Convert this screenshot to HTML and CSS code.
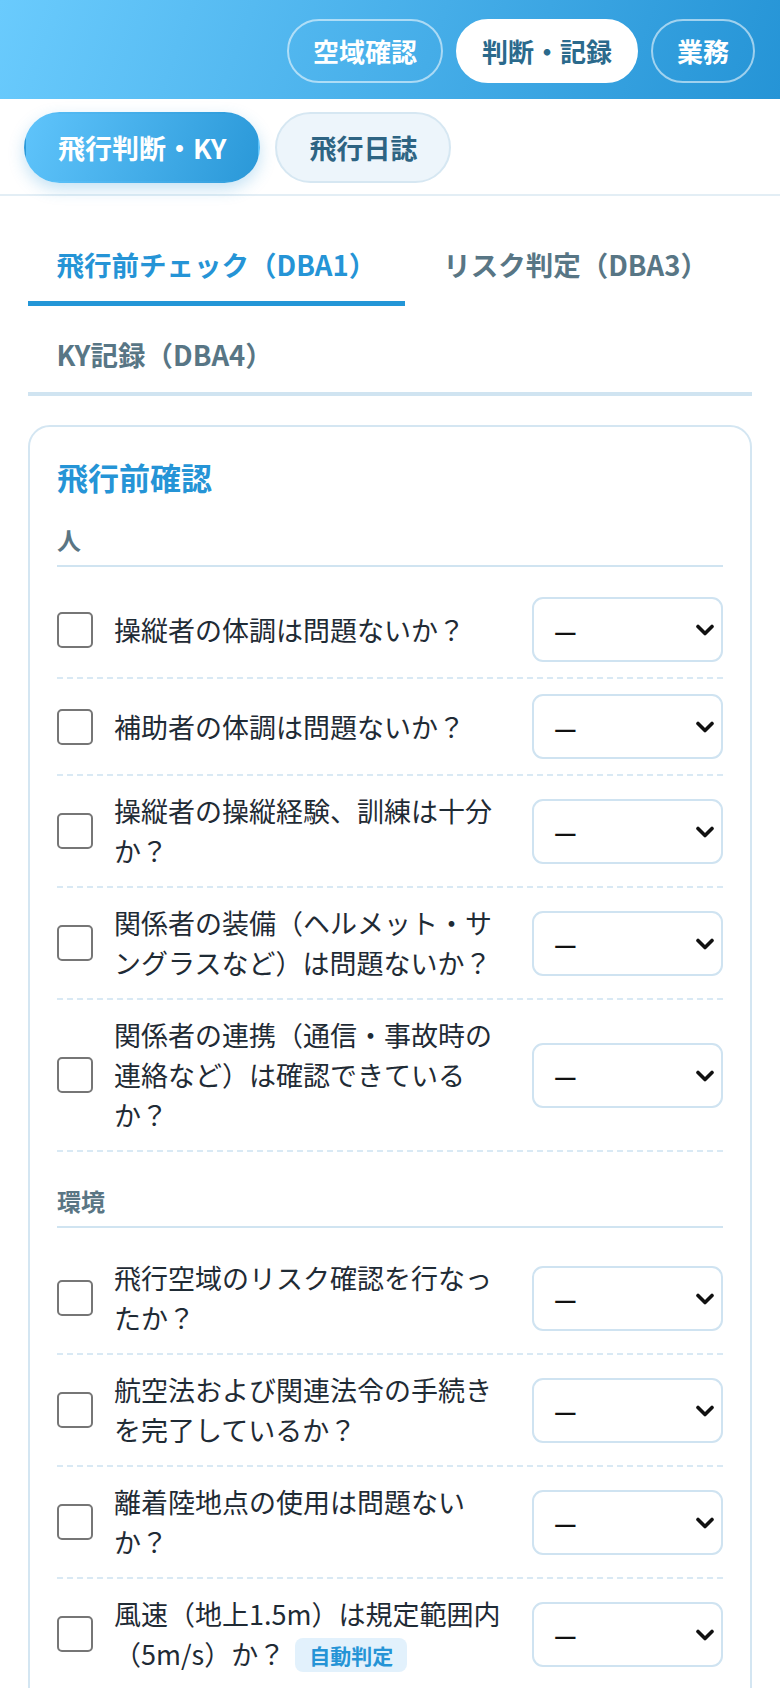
FILE: index.html
```html
<!DOCTYPE html>
<html lang="ja">
<head>
    <meta charset="UTF-8">
    <meta name="viewport" content="width=device-width, initial-scale=1.0">
    <title>飛行判断・KY</title>
    <link rel="stylesheet" href="styles.css">
</head>
<body>

    <!-- 上部ナビ -->
    <header class="app-header">
        <button class="nav-pill">空域確認</button>
        <button class="nav-pill active">判断・記録</button>
        <button class="nav-pill">業務</button>
    </header>

    <!-- サブナビ -->
    <div class="sub-nav">
        <button class="sub-pill active">飛行判断・KY</button>
        <button class="sub-pill">飛行日誌</button>
    </div>

    <main class="page">
        <div class="tabs">
            <button class="tab active">飛行前チェック（DBA1）</button>
            <button class="tab">リスク判定（DBA3）</button>
            <button class="tab">KY記録（DBA4）</button>
        </div>

        <section class="card">
            <h2 class="card-title">飛行前確認</h2>

            <div class="group">
                <h3 class="group-title">人</h3>
                <div class="check-row">
                    <input type="checkbox" class="check">
                    <span class="check-text">操縦者の体調は問題ないか？</span>
                    <div class="select-wrap">
                        <select class="result"><option>—</option><option>OK</option><option>NG</option></select>
                        <svg class="chevron" width="18" height="12" viewBox="0 0 18 12"><polyline points="2,2.5 9,9.5 16,2.5" fill="none" stroke="#111" stroke-width="3.6" stroke-linecap="round" stroke-linejoin="round"/></svg>
                    </div>
                </div>
                <div class="check-row">
                    <input type="checkbox" class="check">
                    <span class="check-text">補助者の体調は問題ないか？</span>
                    <div class="select-wrap">
                        <select class="result"><option>—</option><option>OK</option><option>NG</option></select>
                        <svg class="chevron" width="18" height="12" viewBox="0 0 18 12"><polyline points="2,2.5 9,9.5 16,2.5" fill="none" stroke="#111" stroke-width="3.6" stroke-linecap="round" stroke-linejoin="round"/></svg>
                    </div>
                </div>
                <div class="check-row">
                    <input type="checkbox" class="check">
                    <span class="check-text">操縦者の操縦経験、訓練は十分か？</span>
                    <div class="select-wrap">
                        <select class="result"><option>—</option><option>OK</option><option>NG</option></select>
                        <svg class="chevron" width="18" height="12" viewBox="0 0 18 12"><polyline points="2,2.5 9,9.5 16,2.5" fill="none" stroke="#111" stroke-width="3.6" stroke-linecap="round" stroke-linejoin="round"/></svg>
                    </div>
                </div>
                <div class="check-row">
                    <input type="checkbox" class="check">
                    <span class="check-text">関係者の装備（ヘルメット・サングラスなど）は問題ないか？</span>
                    <div class="select-wrap">
                        <select class="result"><option>—</option><option>OK</option><option>NG</option></select>
                        <svg class="chevron" width="18" height="12" viewBox="0 0 18 12"><polyline points="2,2.5 9,9.5 16,2.5" fill="none" stroke="#111" stroke-width="3.6" stroke-linecap="round" stroke-linejoin="round"/></svg>
                    </div>
                </div>
                <div class="check-row">
                    <input type="checkbox" class="check">
                    <span class="check-text">関係者の連携（通信・事故時の連絡など）は確認できているか？</span>
                    <div class="select-wrap">
                        <select class="result"><option>—</option><option>OK</option><option>NG</option></select>
                        <svg class="chevron" width="18" height="12" viewBox="0 0 18 12"><polyline points="2,2.5 9,9.5 16,2.5" fill="none" stroke="#111" stroke-width="3.6" stroke-linecap="round" stroke-linejoin="round"/></svg>
                    </div>
                </div>
            </div>

            <div class="group">
                <h3 class="group-title">環境</h3>
                <div class="check-row">
                    <input type="checkbox" class="check">
                    <span class="check-text">飛行空域のリスク確認を行なったか？</span>
                    <div class="select-wrap">
                        <select class="result"><option>—</option><option>OK</option><option>NG</option></select>
                        <svg class="chevron" width="18" height="12" viewBox="0 0 18 12"><polyline points="2,2.5 9,9.5 16,2.5" fill="none" stroke="#111" stroke-width="3.6" stroke-linecap="round" stroke-linejoin="round"/></svg>
                    </div>
                </div>
                <div class="check-row">
                    <input type="checkbox" class="check">
                    <span class="check-text">航空法および関連法令の手続きを完了しているか？</span>
                    <div class="select-wrap">
                        <select class="result"><option>—</option><option>OK</option><option>NG</option></select>
                        <svg class="chevron" width="18" height="12" viewBox="0 0 18 12"><polyline points="2,2.5 9,9.5 16,2.5" fill="none" stroke="#111" stroke-width="3.6" stroke-linecap="round" stroke-linejoin="round"/></svg>
                    </div>
                </div>
                <div class="check-row">
                    <input type="checkbox" class="check">
                    <span class="check-text">離着陸地点の使用は問題ないか？</span>
                    <div class="select-wrap">
                        <select class="result"><option>—</option><option>OK</option><option>NG</option></select>
                        <svg class="chevron" width="18" height="12" viewBox="0 0 18 12"><polyline points="2,2.5 9,9.5 16,2.5" fill="none" stroke="#111" stroke-width="3.6" stroke-linecap="round" stroke-linejoin="round"/></svg>
                    </div>
                </div>
                <div class="check-row">
                    <input type="checkbox" class="check">
                    <span class="check-text">風速（地上1.5m）は規定範囲内（5m/s）か？<span class="auto-badge">自動判定</span></span>
                    <div class="select-wrap">
                        <select class="result"><option>—</option><option>OK</option><option>NG</option></select>
                        <svg class="chevron" width="18" height="12" viewBox="0 0 18 12"><polyline points="2,2.5 9,9.5 16,2.5" fill="none" stroke="#111" stroke-width="3.6" stroke-linecap="round" stroke-linejoin="round"/></svg>
                    </div>
                </div>
                <div class="check-row">
                    <input type="checkbox" class="check">
                    <span class="check-text">天候（雨・雪・霧など）は問題ないか？</span>
                    <div class="select-wrap">
                        <select class="result"><option>—</option><option>OK</option><option>NG</option></select>
                        <svg class="chevron" width="18" height="12" viewBox="0 0 18 12"><polyline points="2,2.5 9,9.5 16,2.5" fill="none" stroke="#111" stroke-width="3.6" stroke-linecap="round" stroke-linejoin="round"/></svg>
                    </div>
                </div>
            </div>
        </section>
    </main>

</body>
</html>
```

FILE: styles.css
```css
body {
    font-family: "Noto Sans CJK JP", "Noto Sans", sans-serif;
    background-color: #fff;
    color: #1f2b35;
    margin: 0;
    padding: 0;
}
button {
    font-family: inherit;
    cursor: pointer;
}

/* 上部ナビ */
.app-header {
    height: 99px;
    box-sizing: border-box;
    display: flex;
    justify-content: flex-end;
    align-items: center;
    gap: 13px;
    padding: 2px 25px 0;
    background: linear-gradient(110deg, #6acbfd 0%, #45ade8 55%, #2594d6 100%);
}
.nav-pill {
    font-size: 26px;
    font-weight: 700;
    line-height: 40px;
    padding: 10px 24px;
    color: #fff;
    background: transparent;
    border: 2px solid rgba(255, 255, 255, 0.55);
    border-radius: 999px;
}
.nav-pill.active {
    background: #fff;
    border-color: #fff;
    color: #2b6a8c;
}

/* サブナビ */
.sub-nav {
    display: flex;
    gap: 15px;
    padding: 13px 24px 11px;
    border-bottom: 2px solid #e3eef5;
}
.sub-pill {
    font-size: 27px;
    font-weight: 700;
    line-height: 39px;
    padding: 14px 32px;
    border: 2px solid #d6e7f2;
    border-radius: 999px;
    background: #edf5fb;
    color: #2e6483;
}
.sub-pill.active {
    border-color: transparent;
    background: linear-gradient(110deg, #5fc4fb, #2a98d8);
    color: #fff;
    box-shadow: 0 6px 16px rgba(42, 152, 216, 0.28);
}

.page {
    padding: 33px 28px 40px;
}

/* タブ */
.tabs {
    display: flex;
    flex-wrap: wrap;
    row-gap: 17px;
    column-gap: 10px;
    border-bottom: 4px solid #d0e4f1;
}
.tab {
    font-size: 27.5px;
    font-weight: 700;
    line-height: 39px;
    padding: 16px 28.5px 17px;
    margin-bottom: -4px;
    background: none;
    border: none;
    border-bottom: 5px solid transparent;
    color: #587685;
}
.tab.active {
    color: #2594d6;
    border-bottom-color: #2396d7;
}

/* チェックカード */
.card {
    margin-top: 29px;
    border: 2px solid #d4e6f2;
    border-radius: 22px;
    padding: 27px 27px 20px;
}
.card-title {
    margin: 0;
    font-size: 31px;
    line-height: 45px;
    font-weight: 700;
    color: #2594d6;
}
.group {
    margin-top: 23px;
}
.group + .group {
    margin-top: 31px;
}
.group-title {
    margin: 0 0 15px;
    font-size: 24px;
    line-height: 36px;
    font-weight: 700;
    color: #5a7684;
    padding-bottom: 7px;
    border-bottom: 2px solid #d0e4f1;
}
.check-row {
    display: grid;
    grid-template-columns: 36px 1fr 191px;
    column-gap: 21px;
    align-items: center;
    padding: 15px 0;
    border-bottom: 2px dashed #d9e9f4;
}
.check {
    appearance: none;
    -webkit-appearance: none;
    width: 36px;
    height: 36px;
    margin: 0;
    border: 2px solid #767676;
    border-radius: 5px;
    background: #fff;
}
.check:checked {
    background: #2594d6;
    border-color: #2594d6;
}
.check-text {
    font-size: 27px;
    line-height: 40px;
}
.auto-badge {
    display: inline-block;
    margin-left: 10px;
    padding: 0 14px;
    font-size: 21px;
    line-height: 34px;
    font-weight: 700;
    color: #2594d6;
    background: #e2f1fc;
    border-radius: 8px;
    vertical-align: middle;
    position: relative;
    top: -3px;
}
.select-wrap {
    position: relative;
}
.result {
    appearance: none;
    -webkit-appearance: none;
    width: 191px;
    height: 65px;
    padding: 0 40px 0 20px;
    font-family: inherit;
    font-size: 25px;
    font-weight: 700;
    color: #111;
    background: #fff;
    border: 2px solid #cfe3f1;
    border-radius: 11px;
}
.chevron {
    position: absolute;
    right: 9px;
    top: 27px;
    pointer-events: none;
}
```
